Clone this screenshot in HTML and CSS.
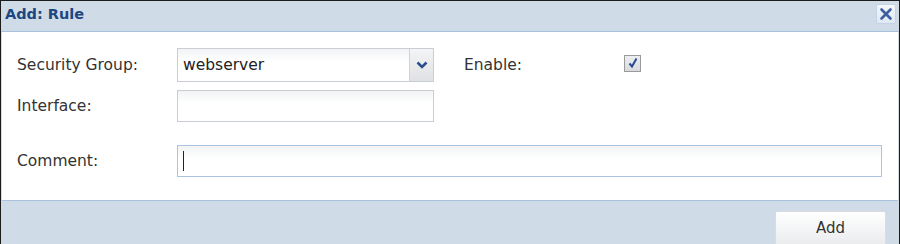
FILE: index.html
```html
<!DOCTYPE html>
<html>
<head>
<meta charset="utf-8">
<link rel="stylesheet" href="styles.css">
</head>
<body>
<div class="win">
  <div class="header">
    <span class="title">Add: Rule</span>
    <button class="close" aria-label="Close">
      <svg width="14" height="14" viewBox="0 0 14 14"><path d="M2.5 2.5 L11.5 11.5 M11.5 2.5 L2.5 11.5" stroke="#3d5f9e" stroke-width="2.6" stroke-linecap="round"/></svg>
    </button>
  </div>
  <div class="body">
    <div class="row r1">
      <label class="lbl">Security Group:</label>
      <div class="combo">
        <span class="combo-text">webserver</span>
        <span class="trigger">
          <svg width="12" height="8" viewBox="0 0 12 8"><path d="M1.5 1.5 L6 6 L10.5 1.5" fill="none" stroke="#2b4f8e" stroke-width="2.6"/></svg>
        </span>
      </div>
      <label class="lbl enable">Enable:</label>
      <span class="check">
        <svg width="12" height="12" viewBox="0 0 12 12"><path d="M2.5 6.5 L5 9.5 L9.5 1.5" fill="none" stroke="#2c4a94" stroke-width="2"/></svg>
      </span>
    </div>
    <div class="row r2">
      <label class="lbl">Interface:</label>
      <div class="field"></div>
    </div>
    <div class="row r3">
      <label class="lbl">Comment:</label>
      <div class="field wide focus"><span class="caret"></span></div>
    </div>
  </div>
  <div class="footer">
    <button class="btn">Add</button>
  </div>
</div>
</body>
</html>
```
FILE: styles.css
```css
* { box-sizing: border-box; }
html, body { margin: 0; padding: 0; }
body {
  width: 900px;
  height: 244px;
  background: #1c1c1c;
  font-family: "DejaVu Sans", Verdana, sans-serif;
  overflow: hidden;
}
.win {
  margin: 1px 1px 0 1px;
  height: 243px;
  background: #cfdbe7;
  display: flex;
  flex-direction: column;
  overflow: hidden;
}
.header {
  height: 31px;
  flex: none;
  display: flex;
  align-items: center;
  justify-content: space-between;
  padding: 0 3px 0 4px;
  border-bottom: 1px solid #a9c2dd;
}
.title {
  font-weight: bold;
  font-size: 14.5px;
  color: #1d4781;
  margin-top: -4px;
}
.close {
  width: 20px;
  height: 20px;
  padding: 0;
  margin-top: -5px;
  border: 1px solid #c4d3e6;
  border-radius: 2px;
  background: linear-gradient(#f4f7fb, #dfe8f3);
  display: flex;
  align-items: center;
  justify-content: center;
}
.body {
  height: 169px;
  flex: none;
  background: #fff;
  margin: 0 1px;
  padding-top: 16px;
  border-bottom: 1px solid #a9c2dd;
}
.row {
  display: flex;
  align-items: center;
}
.lbl {
  font-size: 15.5px;
  color: #333;
  width: 175px;
  padding-left: 15px;
  flex: none;
}
.combo {
  width: 257px;
  height: 34px;
  border: 1px solid #c9ced4;
  background: linear-gradient(#f1f3f5, #fff 40%);
  display: flex;
  align-items: center;
  justify-content: space-between;
}
.combo-text {
  font-size: 15.5px;
  color: #222;
  padding-left: 5px;
}
.trigger {
  width: 24px;
  height: 32px;
  border-left: 1px solid #cfd3d8;
  background: linear-gradient(#f3f4f5, #dfe1e4);
  display: flex;
  align-items: center;
  justify-content: center;
}
.enable {
  width: 190px;
  padding-left: 30px;
}
.check {
  width: 17px;
  height: 17px;
  border: 1px solid #9a9a9a;
  background: linear-gradient(#eceef0, #d8dadd);
  display: flex;
  align-items: center;
  justify-content: center;
  margin-top: -4px;
}
.r2 { margin-top: 8px; }
.r3 { margin-top: 23px; }
.field {
  width: 257px;
  height: 32px;
  border: 1px solid #c9ced4;
  background: linear-gradient(#f1f3f5, #fff 40%);
}
.field.wide {
  width: 705px;
  border-color: #a8c4e2;
  display: flex;
  align-items: center;
  padding-left: 5px;
}
.caret {
  width: 1px;
  height: 20px;
  background: #222;
}
.footer {
  flex: 1;
  display: flex;
  justify-content: flex-end;
  padding: 10px 13px 0 0;
}
.btn {
  width: 111px;
  height: 36px;
  border: 1px solid #d8dde3;
  border-radius: 2px;
  background: linear-gradient(#ffffff, #f4f5f6 50%, #e8eaec);
  font-family: "DejaVu Sans", Verdana, sans-serif;
  font-size: 15px;
  color: #333;
  padding: 0 0 3px 0;
  align-self: flex-start;
}
```
